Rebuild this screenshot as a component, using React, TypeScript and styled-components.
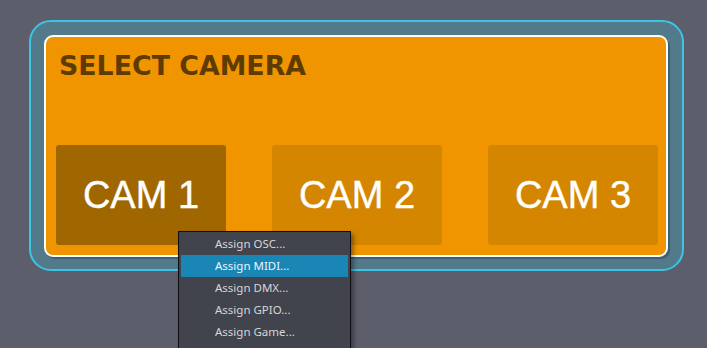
import React, { useState } from 'react';
import styled, { createGlobalStyle } from 'styled-components';

const GlobalStyle = createGlobalStyle`
html, body {
  margin: 0;
  padding: 0;
  background: #5d5e6c;
  overflow: hidden;
}
`;

const Page = styled.div`
position: relative;
height: 348px;
padding: 20px 0 0 29px;
box-sizing: border-box;
`;

const Frame = styled.div`
width: 655px;
height: 251px;
box-sizing: border-box;
border: 2px solid #3cc4e5;
border-radius: 22px;
background: #527a8a;
padding: 13px 15px 12px 13px;
display: flex;
`;

const Panel = styled.div`
flex: 1;
display: flex;
flex-direction: column;
border: 2px solid #ffffff;
border-radius: 9px;
background: #f09500;
box-shadow: 2px 2px 0 #3d6070;
padding: 0 8px 10px 10px;
`;

const Title = styled.h1`
margin: 13px 0 0 3px;
font-family: "DejaVu Sans", Verdana, sans-serif;
font-weight: bold;
font-size: 26.8px;
line-height: 32px;
color: #5e3b00;
`;

const ButtonRow = styled.div`
margin-top: auto;
display: flex;
gap: 46px;
`;

const CamButton = styled.div<{ $active: boolean }>`
width: 170px;
height: 100px;
border-radius: 3px;
background: ${p => (p.$active ? '#a06600' : '#d48600')};
display: flex;
justify-content: center;
align-items: center;
font-family: "Liberation Sans", Arial, sans-serif;
font-size: 38px;
color: #ffffff;
-webkit-text-stroke: 0.4px #ffffff;
cursor: pointer;
`;

const Menu = styled.div`
position: absolute;
left: 178px;
top: 231px;
width: 173px;
height: 117px;
box-sizing: border-box;
border: 1px solid #0e0e12;
border-bottom: none;
background: #41434d;
padding: 1px 2px;
box-shadow: 3px 3px 4px rgba(0, 0, 0, 0.35);
overflow: hidden;
`;

const MenuItem = styled.div<{ $hover: boolean }>`
height: 22px;
line-height: 22px;
padding-left: 34px;
font-family: "Noto Sans", "Open Sans", sans-serif;
font-size: 11.5px;
color: ${p => (p.$hover ? '#eef4f8' : '#d6d6da')};
background: ${p => (p.$hover ? '#1a86b5' : 'transparent')};
white-space: nowrap;
`;

const cams = ['CAM 1', 'CAM 2', 'CAM 3'];
const menuItems = ['Assign OSC...', 'Assign MIDI...', 'Assign DMX...', 'Assign GPIO...', 'Assign Game...'];

const App: React.FC = () => {
  const [active, setActive] = useState(0);
  const [hover, setHover] = useState(1);
  return (
    <Page>
      <GlobalStyle />
      <Frame>
        <Panel>
          <Title>SELECT CAMERA</Title>
          <ButtonRow>
            {cams.map((c, i) => (
              <CamButton key={c} $active={i === active} onClick={() => setActive(i)}>
                {c}
              </CamButton>
            ))}
          </ButtonRow>
        </Panel>
      </Frame>
      <Menu>
        {menuItems.map((m, i) => (
          <MenuItem key={m} $hover={i === hover} onMouseEnter={() => setHover(i)}>
            {m}
          </MenuItem>
        ))}
      </Menu>
    </Page>
  );
};

export default App;
